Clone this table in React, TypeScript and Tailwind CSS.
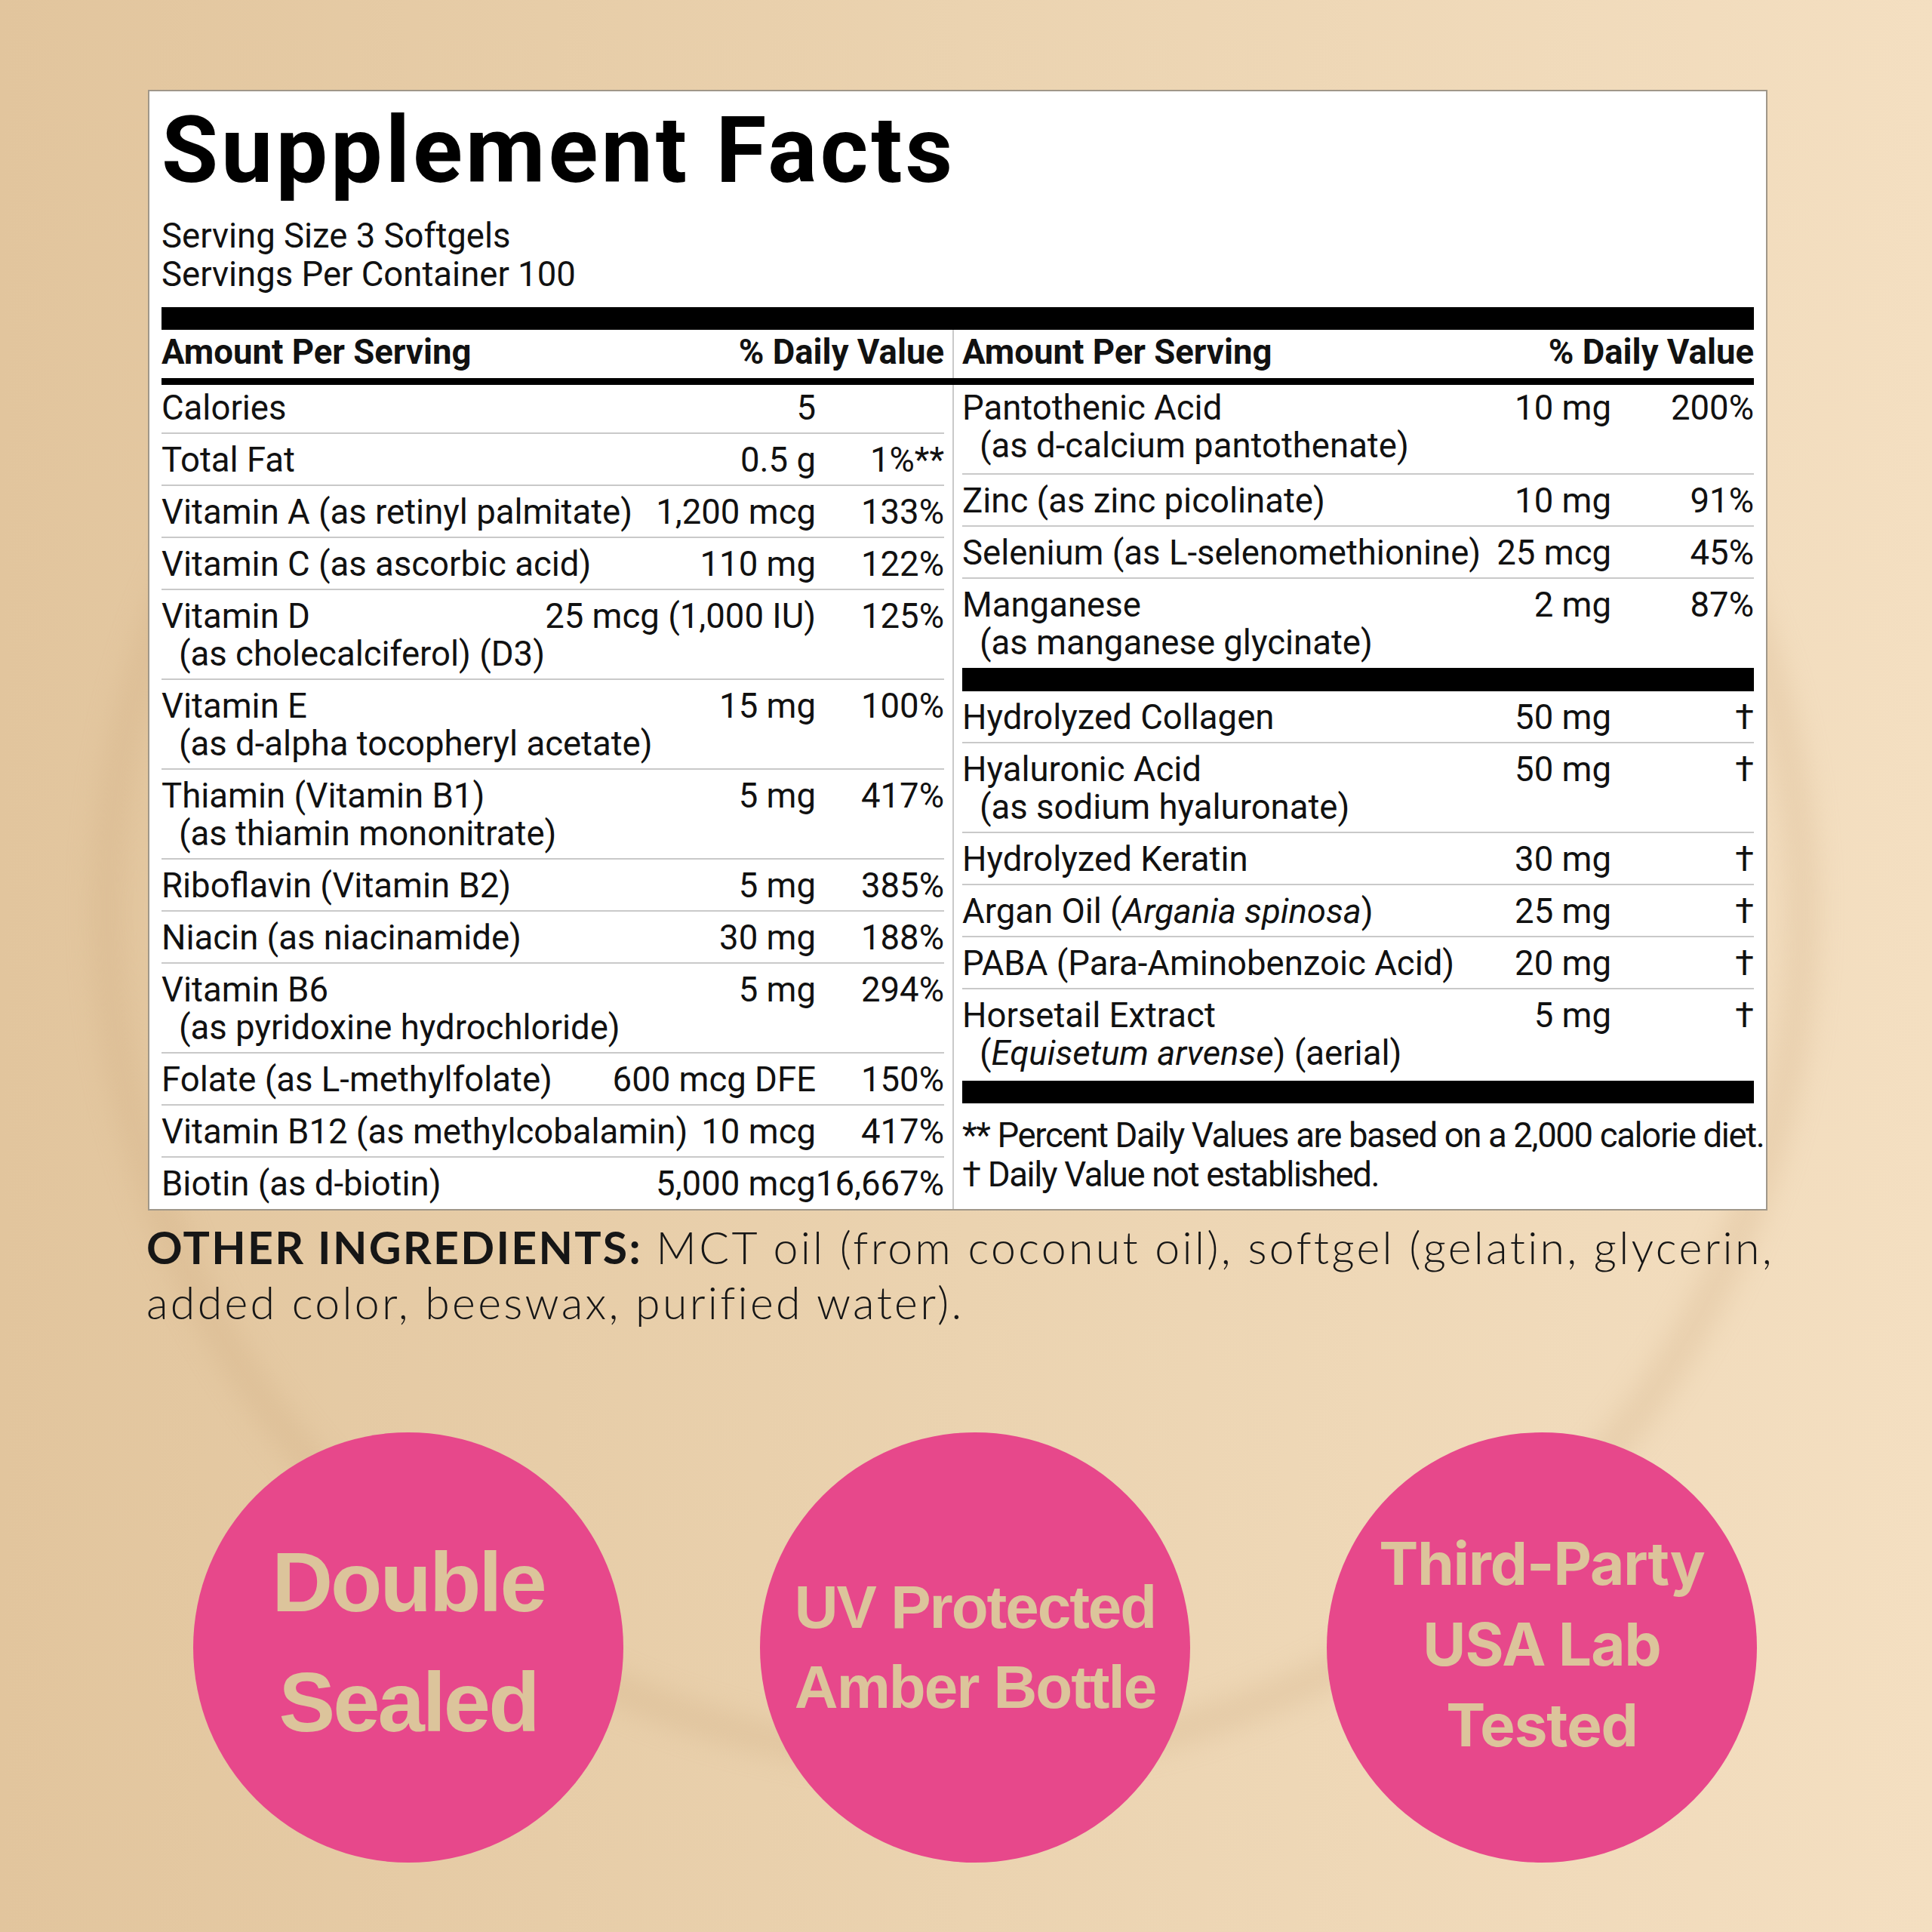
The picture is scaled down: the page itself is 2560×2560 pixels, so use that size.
import React from "react";

type Row = {
  name: React.ReactNode;
  sub?: React.ReactNode;
  amt: string;
  dv: string;
  first?: boolean;
  last?: boolean;
  tall?: boolean;
};

const leftRows: Row[] = [
  { name: "Calories", amt: "5", dv: "", first: true },
  { name: "Total Fat", amt: "0.5 g", dv: "1%**" },
  { name: "Vitamin A (as retinyl palmitate)", amt: "1,200 mcg", dv: "133%" },
  { name: "Vitamin C (as ascorbic acid)", amt: "110 mg", dv: "122%" },
  { name: "Vitamin D", sub: "(as cholecalciferol) (D3)", amt: "25 mcg (1,000 IU)", dv: "125%" },
  { name: "Vitamin E", sub: "(as d-alpha tocopheryl acetate)", amt: "15 mg", dv: "100%" },
  { name: "Thiamin (Vitamin B1)", sub: "(as thiamin mononitrate)", amt: "5 mg", dv: "417%" },
  { name: "Riboflavin (Vitamin B2)", amt: "5 mg", dv: "385%" },
  { name: "Niacin (as niacinamide)", amt: "30 mg", dv: "188%" },
  { name: "Vitamin B6", sub: "(as pyridoxine hydrochloride)", amt: "5 mg", dv: "294%" },
  { name: "Folate (as L-methylfolate)", amt: "600 mcg DFE", dv: "150%" },
  { name: "Vitamin B12 (as methylcobalamin)", amt: "10 mcg", dv: "417%" },
  { name: "Biotin (as d-biotin)", amt: "5,000 mcg", dv: "16,667%", last: true },
];

const rightRowsA: Row[] = [
  { name: "Pantothenic Acid", sub: "(as d-calcium pantothenate)", amt: "10 mg", dv: "200%", first: true, tall: true },
  { name: "Zinc (as zinc picolinate)", amt: "10 mg", dv: "91%" },
  { name: "Selenium (as L-selenomethionine)", amt: "25 mcg", dv: "45%" },
  { name: "Manganese", sub: "(as manganese glycinate)", amt: "2 mg", dv: "87%", last: true },
];

const rightRowsB: Row[] = [
  { name: "Hydrolyzed Collagen", amt: "50 mg", dv: "†" },
  { name: "Hyaluronic Acid", sub: "(as sodium hyaluronate)", amt: "50 mg", dv: "†" },
  { name: "Hydrolyzed Keratin", amt: "30 mg", dv: "†" },
  {
    name: (
      <>
        Argan Oil (<i>Argania spinosa</i>)
      </>
    ),
    amt: "25 mg",
    dv: "†",
  },
  { name: "PABA (Para-Aminobenzoic Acid)", amt: "20 mg", dv: "†" },
  {
    name: "Horsetail Extract",
    sub: (
      <>
        (<i>Equisetum arvense</i>) (aerial)
      </>
    ),
    amt: "5 mg",
    dv: "†",
    last: true,
    tall: true,
  },
];

function FactRow({ row, side }: { row: Row; side: "left" | "right" }) {
  const pb = row.tall ? "pb-[11px] " : row.last ? "pb-[8px] " : "pb-[7px] ";
  return (
    <div
      className={
        "flex items-start leading-[50px] " +
        (row.first ? "pt-[6px] " : "pt-[10px] ") +
        pb +
        (row.last ? "" : "border-b-2 border-[#c9c9c9]")
      }
    >
      <div className="min-w-0 flex-1 whitespace-nowrap">
        <div>{row.name}</div>
        {row.sub ? <div className="pl-[23px]">{row.sub}</div> : null}
      </div>
      <div className="shrink-0 whitespace-nowrap text-right">{row.amt}</div>
      <div
        className={
          "shrink-0 whitespace-nowrap text-right " +
          (side === "left" ? "min-w-[170px]" : "min-w-[189px]")
        }
      >
        {row.dv}
      </div>
    </div>
  );
}

function Badge({
  lines,
  textClass,
  boxClass,
}: {
  lines: string[];
  textClass: string;
  boxClass?: string;
}) {
  return (
    <div className="flex h-[570px] w-[570px] shrink-0 items-center justify-center rounded-full bg-[#e7488b]">
      <div className={"flex flex-col items-center text-[#dcc49b] " + textClass + " " + (boxClass ?? "")}>
        {lines.map((l) => (
          <div key={l} className="whitespace-nowrap">
            {l}
          </div>
        ))}
      </div>
    </div>
  );
}

export default function App() {
  return (
    <div className="relative h-[2560px] w-[2560px] overflow-hidden bg-gradient-to-r from-[#e2c59d] via-[#ebd3b0] to-[#f4dfc1]">
      {/* faint background ring (decorative shadow of product) */}
      <div className="pointer-events-none absolute left-[122px] top-[65px] h-[2286px] w-[2286px] rounded-full border-[40px] border-[#c9a57a] border-t-transparent opacity-25 blur-[18px]" />

      <div className="relative flex flex-col pt-[119px]">
        {/* Supplement Facts panel */}
        <div className="ml-[196px] w-[2146px] border-2 border-[#a09789] bg-white px-[16px] font-['Roboto',sans-serif] text-[45.5px] text-[#111]">
          <div className="pt-[18px] text-[122px] font-bold leading-[122px] tracking-[4px] text-black">
            Supplement Facts
          </div>
          <div className="mt-[26px] leading-[51px]">
            <div>Serving Size 3 Softgels</div>
            <div>Servings Per Container 100</div>
          </div>
          <div className="mt-[18px] h-[30px] bg-black" />
          {/* header row */}
          <div className="flex font-bold leading-[50px]">
            <div className="flex w-[1048px] shrink-0 justify-between pr-[11px] pt-[5px] pb-[9px]">
              <span>Amount Per Serving</span>
              <span>% Daily Value</span>
            </div>
            <div className="flex min-w-0 flex-1 justify-between border-l-2 border-[#c9c9c9] pl-[11px] pt-[5px] pb-[9px]">
              <span>Amount Per Serving</span>
              <span>% Daily Value</span>
            </div>
          </div>
          <div className="h-[9px] bg-black" />
          {/* body */}
          <div className="flex">
            <div className="w-[1048px] shrink-0 pr-[11px]">
              {leftRows.map((r, i) => (
                <FactRow key={i} row={r} side="left" />
              ))}
            </div>
            <div className="min-w-0 flex-1 border-l-2 border-[#c9c9c9] pl-[11px]">
              {rightRowsA.map((r, i) => (
                <FactRow key={i} row={r} side="right" />
              ))}
              <div className="h-[31px] bg-black" />
              {rightRowsB.map((r, i) => (
                <FactRow key={i} row={r} side="right" />
              ))}
              <div className="h-[30px] bg-black" />
              <div className="pt-[17px] leading-[52px] tracking-[-1.35px] whitespace-nowrap">
                <div>** Percent Daily Values are based on a 2,000 calorie diet.</div>
                <div>† Daily Value not established.</div>
              </div>
            </div>
          </div>
        </div>

        {/* Other ingredients */}
        <div className="ml-[194px] mt-[12px] w-[2220px] font-['Lato',sans-serif] text-[59px] leading-[73px] tracking-[3.3px] text-[#161616]">
          <span className="font-bold tracking-[2.3px]">OTHER INGREDIENTS:</span>{" "}
          <span className="font-light">
            MCT oil (from coconut oil), softgel (gelatin, glycerin, added color, beeswax, purified water).
          </span>
        </div>

        {/* Badges */}
        <div className="mt-[136px] flex gap-[181px] pl-[256px]">
          <Badge
            lines={["Double", "Sealed"]}
            textClass="font-['Liberation_Sans',sans-serif] font-bold text-[112px] leading-[159px] tracking-[-3px]"
            boxClass="mb-[14px]"
          />
          <Badge
            lines={["UV Protected", "Amber Bottle"]}
            textClass="font-['Liberation_Sans',sans-serif] font-bold text-[80px] leading-[106px] tracking-[-2px]"
          />
          <Badge
            lines={["Third-Party", "USA Lab", "Tested"]}
            textClass="font-['Inter',sans-serif] font-bold text-[78px] leading-[107px] tracking-[-1px]"
            boxClass="mb-[10px]"
          />
        </div>
      </div>
    </div>
  );
}
